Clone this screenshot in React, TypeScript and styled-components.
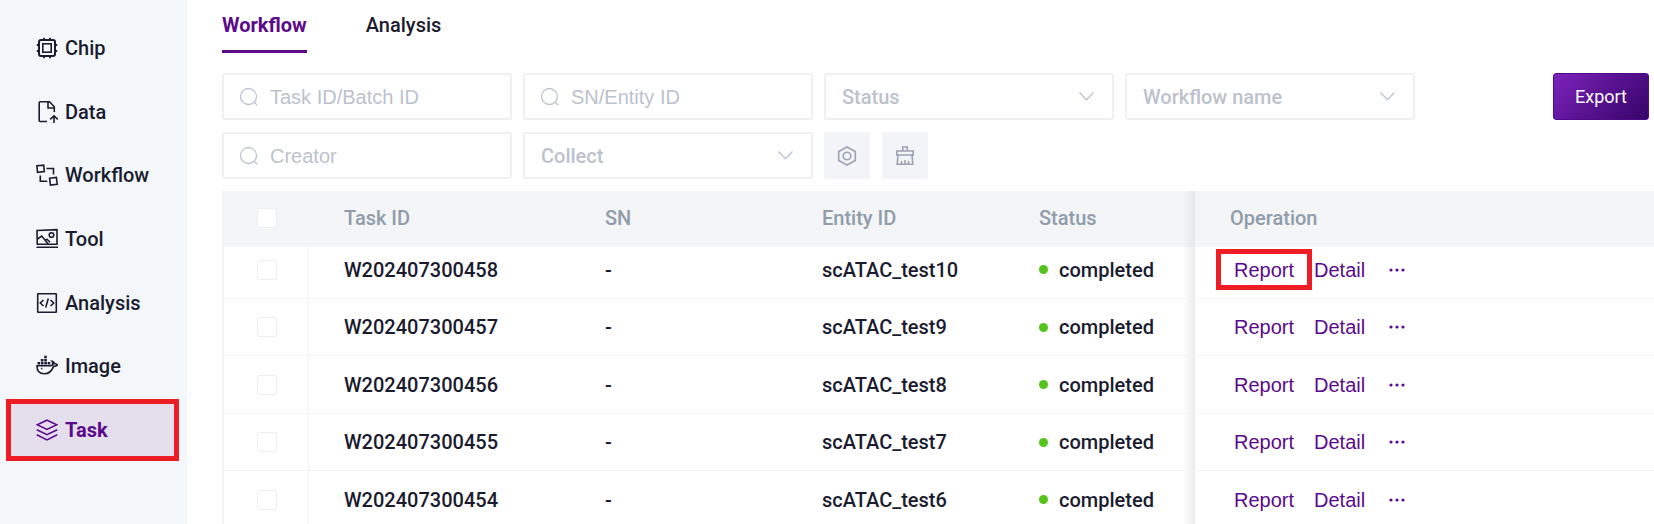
import React from "react";
import styled, { createGlobalStyle, css } from "styled-components";

const colors = {
  ink: "#1b1b2f",
  purple: "#5b0a8c",
  sidebar: "#f3f7fa",
  active: "#e5dfed",
  header: "#f3f5f7",
  headerText: "#909caa",
  line: "#f4f5f6",
  fieldBorder: "#eff0f2",
  placeholder: "#bcc2cd",
  muted: "#9aa3b3",
  red: "#ee1c25",
  green: "#52c41a",
};

const GlobalStyle = createGlobalStyle`
  *, *::before, *::after { box-sizing: border-box; }
  body {
    margin: 0;
    background: #fff;
    color: ${colors.ink};
    font: 500 20px/24px Roboto, "Liberation Sans", sans-serif;
  }
`;

const Page = styled.div`
  display: flex;
  height: 100vh;
  overflow: hidden;
`;

const Sidebar = styled.nav`
  flex: 0 0 187px;
  padding: 17px 8px 0 6px;
  background: ${colors.sidebar};
`;

const NavList = styled.ul`
  display: flex;
  flex-direction: column;
  justify-content: space-between;
  height: 444px;
  margin: 0;
  padding: 0;
  list-style: none;
`;

const NavLink = styled.a<{ $active?: boolean }>`
  display: flex;
  align-items: center;
  gap: 7px;
  height: 62px;
  padding-left: 25px;
  border: 5px solid transparent;
  color: ${colors.ink};
  text-decoration: none;
  ${(p) =>
    p.$active &&
    css`
      border-color: ${colors.red};
      background: ${colors.active};
      color: ${colors.purple};
      font-weight: 700;
    `}
`;

const Main = styled.main`
  flex: 1;
  min-width: 0;
  padding-left: 35px;
`;

const Tabs = styled.div`
  display: flex;
  gap: 59px;
  padding-top: 13px;
`;

const Tab = styled.button<{ $active?: boolean }>`
  height: 40px;
  padding: 0 0 13px;
  border: 0;
  border-bottom: 3px solid ${(p) => (p.$active ? colors.purple : "transparent")};
  background: none;
  color: ${(p) => (p.$active ? colors.purple : colors.ink)};
  font: inherit;
  font-weight: ${(p) => (p.$active ? 700 : 500)};
`;

const Toolbar = styled.div`
  display: flex;
  justify-content: space-between;
  align-items: flex-start;
  padding: 20px 5px 12px 0;
`;

const Filters = styled.div`
  display: flex;
  flex: 1;
  flex-wrap: wrap;
  gap: 12px 11px;
`;

const FilterButtons = styled.div`
  display: flex;
  gap: 12px;
`;

const Field = styled.label`
  display: flex;
  align-items: center;
  gap: 11px;
  width: 290px;
  height: 47px;
  padding: 0 16px 0 15px;
  border: 2px solid ${colors.fieldBorder};
  border-radius: 3px;
  color: ${colors.placeholder};
`;

const TextInput = styled.input`
  flex: 1;
  min-width: 0;
  padding: 0;
  border: 0;
  outline: 0;
  background: none;
  color: ${colors.ink};
  font: 400 20px/24px "Liberation Sans", Arial, sans-serif;
  &::placeholder {
    color: ${colors.placeholder};
    opacity: 1;
  }
`;

const SelectBox = styled.label`
  display: grid;
  align-items: center;
  width: 290px;
  height: 47px;
  color: ${colors.placeholder};
  & > * {
    grid-area: 1 / 1;
  }
  & > svg {
    justify-self: end;
    margin-right: 20px;
    pointer-events: none;
  }
`;

const Select = styled.select`
  width: 100%;
  height: 100%;
  padding: 0 40px 0 16px;
  border: 2px solid ${colors.fieldBorder};
  border-radius: 3px;
  background: #fff;
  color: ${colors.placeholder};
  font: inherit;
  appearance: none;
`;

const IconButton = styled.button`
  display: grid;
  place-items: center;
  width: 46px;
  height: 47px;
  padding: 0;
  border: 0;
  border-radius: 2px;
  background: #f3f4f7;
  color: ${colors.muted};
`;

const ExportButton = styled.button`
  width: 96px;
  height: 47px;
  padding: 0;
  border: 1px solid #4f0a8a;
  border-radius: 3px;
  background: linear-gradient(135deg, #7c22bb, #360368);
  color: #fff;
  font: 400 18px/24px Roboto, sans-serif;
`;

const Table = styled.table`
  width: 100%;
  border-collapse: separate;
  border-spacing: 0;
  table-layout: fixed;
`;

const HeadCell = styled.th<{ $width?: number }>`
  width: ${(p) => (p.$width ? `${p.$width}px` : "auto")};
  height: 56px;
  padding: 0 0 2px 35px;
  background: ${colors.header};
  color: ${colors.headerText};
  font-weight: 500;
  text-align: left;
`;

const Cell = styled.td`
  padding: 0 0 0 35px;
  border-bottom: 1px solid ${colors.line};
`;

const CheckCell = styled(Cell)`
  border-right: 1px solid ${colors.line};
  border-left: 2px solid ${colors.line};
  padding-left: 33px;
`;

const StatusCell = styled(Cell)`
  background: linear-gradient(to left, #ececee, rgba(255, 255, 255, 0) 12px);
`;

const StatusHead = styled(HeadCell)`
  background: linear-gradient(to left, #e5e7e9, ${colors.header} 12px);
`;

const ActionCell = styled(Cell)`
  padding-left: 39px;
`;

const Row = styled.tr`
  height: 58px;
  &:nth-child(even) {
    height: 57px;
  }
  &:first-child {
    height: 52px;
  }
  &:first-child > td {
    padding-bottom: 6px;
  }
`;

const Checkbox = styled.input`
  display: block;
  width: 20px;
  height: 20px;
  margin: 0;
  border: 1px solid #ebedf0;
  border-radius: 3px;
  background: #fff;
  appearance: none;
`;

const Status = styled.span`
  display: flex;
  align-items: center;
  gap: 11px;
  &::before {
    content: "";
    width: 9px;
    height: 9px;
    border-radius: 50%;
    background: ${colors.green};
  }
`;

const Actions = styled.div`
  display: flex;
  align-items: center;
  gap: 20px;
  font: 400 20px/24px "Liberation Sans", Arial, sans-serif;
`;

const ActionLink = styled.a<{ $marked?: boolean }>`
  position: relative;
  color: ${colors.purple};
  text-decoration: none;
  ${(p) =>
    p.$marked &&
    css`
      &::after {
        content: "";
        position: absolute;
        inset: -9px -18px -8px;
        border: 5px solid ${colors.red};
      }
    `}
`;

const MoreButton = styled.button`
  display: flex;
  padding: 4px;
  border: 0;
  background: none;
  color: ${colors.purple};
`;

type IconProps = { children: React.ReactNode; width?: number; height?: number; stroke?: number };

const Icon = ({ children, width = 22, height = 22, stroke = 1.6 }: IconProps) => (
  <svg
    width={width}
    height={height}
    viewBox={`0 0 ${width} ${height}`}
    fill="none"
    stroke="currentColor"
    strokeWidth={stroke}
    aria-hidden="true"
  >
    {children}
  </svg>
);

const ChipIcon = () => (
  <Icon>
    <rect x="3" y="3" width="16" height="16" rx="2" strokeWidth="2" />
    <rect x="6.8" y="6.8" width="8.4" height="8.4" />
    <path d="M8 .8v2.2M14 .8v2.2M8 19v2.200M14 19v2.200M.8 8h2.200M.8 14h2.200M19 8h2.200M19 14h2.200" strokeWidth="1.800" />
  </Icon>
);

const DataIcon = () => (
  <Icon>
    <path d="M11 20.500H4.200a1 1 0 0 1-1-1V1.800a1 1 0 0 1 1-1h9.300l4.800 5V11" />
    <path d="M12 1v6h6" />
    <path d="M18 22v-7M14.200 18.400l3.800-3.600 3.800 3.600" />
  </Icon>
);

const WorkflowIcon = () => (
  <Icon>
    <path d="M.9 1.800l6.800-.6.6 6.400-6.800.7zM13.600 14.200l6.800-.8.8 6.800-6.800.8z" />
    <path d="M10.500 4.500h7v6M4.300 11.500v5.700h7" />
  </Icon>
);

const ToolIcon = () => (
  <Icon>
    <path d="M1 2.500l20-.8v14.500H1.300zM.5 19.200h21.500" />
    <circle cx="15.500" cy="7" r="2.300" />
    <path d="M1.500 11l4.200-3 6.500 8M9.500 12.200l1.500-1 3 3" />
  </Icon>
);

const AnalysisIcon = () => (
  <Icon>
    <rect x="1.700" y="1.700" width="18.600" height="18.600" rx=".5" />
    <path d="M7.500 8L4.300 11l3.200 3M14.500 8l3.200 3-3.200 3M12.300 6.500l-2.600 9" />
  </Icon>
);

const DockerIcon = () => (
  <Icon>
    <path d="M1 10.800h13.500c1.600 0 2.300-.6 2.300-2.200 0-1 0-1.500-.6-2.300 1.300.3 2.100 1.500 2.200 2.500 1.300-.2 2.400.3 3.100 1.300-1.200 1.100-2.500 1.400-3.900 1.300-1.700 4.500-4.700 7.400-9.300 7.400C3.500 18.800.8 16 1 10.800z" />
    <path d="M1.500 8.200h13.300M4.800 5.200h6.500M8.200 2h3" strokeWidth="2.600" strokeDasharray="2.600 .8" />
    <path d="M5 13.500h1.300" />
  </Icon>
);

const TaskIcon = () => (
  <Icon>
    <path d="M11 1.200l9.800 4.600L11 10.400 1.200 5.800zM.8 10.800L11 15.700l10.200-4.900M.8 15.800L11 20.900l10.200-5.100" />
  </Icon>
);

const SearchIcon = () => (
  <Icon width={20} height={20} stroke={1.3}>
    <circle cx="9.500" cy="9.500" r="8" />
    <path d="M15.200 15.200l3 3" />
  </Icon>
);

const ChevronIcon = () => (
  <Icon width={15} height={9} stroke={1.3}>
    <path d="M.5.5l7 7.300 7-7.300" />
  </Icon>
);

const NutIcon = () => (
  <Icon width={20} height={20} stroke={1.6}>
    <path d="M10 1l8.300 4.500v9L10 19l-8.300-4.500v-9z" />
    <circle cx="10" cy="10" r="3.800" />
  </Icon>
);

const BrushIcon = () => (
  <Icon width={20} height={20} stroke={1.6}>
    <path d="M7.700 5V1h4.600v4M1.800 5h16.400v4H1.800zM3 9l-.8 9.300h15.600L17 9M6.500 18v-3M10 18v-4M13.500 18v-3" />
  </Icon>
);

const navItems = [
  { label: "Chip", icon: <ChipIcon /> },
  { label: "Data", icon: <DataIcon /> },
  { label: "Workflow", icon: <WorkflowIcon /> },
  { label: "Tool", icon: <ToolIcon /> },
  { label: "Analysis", icon: <AnalysisIcon /> },
  { label: "Image", icon: <DockerIcon /> },
  { label: "Task", icon: <TaskIcon />, active: true },
];

const tasks = [
  { id: "W202407300458", entity: "scATAC_test10" },
  { id: "W202407300457", entity: "scATAC_test9" },
  { id: "W202407300456", entity: "scATAC_test8" },
  { id: "W202407300455", entity: "scATAC_test7" },
  { id: "W202407300454", entity: "scATAC_test6" },
];

const SearchField = ({ label }: { label: string }) => (
  <Field>
    <SearchIcon />
    <TextInput type="text" placeholder={label} aria-label={label} />
  </Field>
);

const SelectField = ({ label }: { label: string }) => (
  <SelectBox>
    <Select aria-label={label}>
      <option>{label}</option>
    </Select>
    <ChevronIcon />
  </SelectBox>
);

export default function App() {
  return (
    <Page>
      <GlobalStyle />
      <Sidebar>
        <NavList>
          {navItems.map(({ label, icon, active }) => (
            <li key={label}>
              <NavLink href="#" $active={active}>
                {icon}
                {label}
              </NavLink>
            </li>
          ))}
        </NavList>
      </Sidebar>
      <Main>
        <Tabs role="tablist">
          <Tab role="tab" aria-selected $active>
            Workflow
          </Tab>
          <Tab role="tab" aria-selected={false}>
            Analysis
          </Tab>
        </Tabs>
        <Toolbar>
          <Filters>
            <SearchField label="Task ID/Batch ID" />
            <SearchField label="SN/Entity ID" />
            <SelectField label="Status" />
            <SelectField label="Workflow name" />
            <SearchField label="Creator" />
            <SelectField label="Collect" />
            <FilterButtons>
              <IconButton aria-label="Settings">
                <NutIcon />
              </IconButton>
              <IconButton aria-label="Clear filters">
                <BrushIcon />
              </IconButton>
            </FilterButtons>
          </Filters>
          <ExportButton>Export</ExportButton>
        </Toolbar>
        <Table>
          <thead>
            <tr>
              <HeadCell $width={87}>
                <Checkbox type="checkbox" aria-label="Select all" />
              </HeadCell>
              <HeadCell $width={261}>Task ID</HeadCell>
              <HeadCell $width={217}>SN</HeadCell>
              <HeadCell $width={217}>Entity ID</HeadCell>
              <StatusHead $width={191}>Status</StatusHead>
              <HeadCell>Operation</HeadCell>
            </tr>
          </thead>
          <tbody>
            {tasks.map((task, index) => (
              <Row key={task.id}>
                <CheckCell>
                  <Checkbox type="checkbox" aria-label={`Select ${task.id}`} />
                </CheckCell>
                <Cell>{task.id}</Cell>
                <Cell>-</Cell>
                <Cell>{task.entity}</Cell>
                <StatusCell>
                  <Status>completed</Status>
                </StatusCell>
                <ActionCell>
                  <Actions>
                    <ActionLink href="#" $marked={index === 0}>
                      Report
                    </ActionLink>
                    <ActionLink href="#">Detail</ActionLink>
                    <MoreButton aria-label="More">
                      <svg width="16" height="4" viewBox="0 0 16 4" fill="currentColor">
                        <circle cx="2" cy="2" r="1.600" />
                        <circle cx="8" cy="2" r="1.600" />
                        <circle cx="14" cy="2" r="1.600" />
                      </svg>
                    </MoreButton>
                  </Actions>
                </ActionCell>
              </Row>
            ))}
          </tbody>
        </Table>
      </Main>
    </Page>
  );
}
